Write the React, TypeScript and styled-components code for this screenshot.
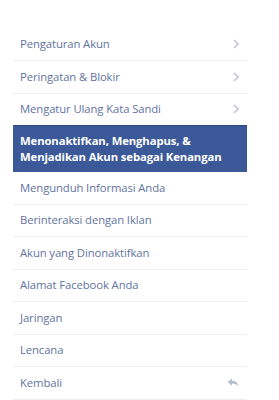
import styled, { createGlobalStyle } from "styled-components";

const GlobalStyle = createGlobalStyle`
  html, body {
    margin: 0;
    padding: 0;
    background: #ffffff;
  }
  body {
    font-family: "Open Sans", "DejaVu Sans", sans-serif;
  }
`;

const Page = styled.div`
  padding: 28.5px 32px 0 13px;
`;

const Menu = styled.ul`
  list-style: none;
  margin: 0;
  padding: 0;
  width: 234px;
`;

const Item = styled.li<{ $active?: boolean }>`
  display: flex;
  align-items: center;
  justify-content: space-between;
  min-height: 32.5px;
  padding: ${(p) => (p.$active ? "7px 7px 6px" : "0 7px")};
  box-sizing: border-box;
  border-bottom: 1px solid ${(p) => (p.$active ? "#3b5998" : "#eceef1")};
  border-top: ${(p) => (p.$active ? "1px solid #2d4a86" : "none")};
  margin-top: ${(p) => (p.$active ? "-1px" : "0")};
  background: ${(p) => (p.$active ? "#3b5998" : "transparent")};
  color: ${(p) => (p.$active ? "#ffffff" : "#62739f")};
  font-size: 11.3px;
  font-weight: ${(p) => (p.$active ? 700 : 400)};
  line-height: 16px;
  letter-spacing: -0.1px;
`;

const Label = styled.span``;

const Icon = styled.span`
  display: flex;
  align-items: center;
  color: #c3c6cf;
  margin-right: 1px;
`;

const Chevron = () => (
  <svg width="6" height="10" viewBox="0 0 6 10">
    <path d="M1 1l4 4-4 4" fill="none" stroke="currentColor" strokeWidth="1.6" />
  </svg>
);

const Back = () => (
  <svg width="12" height="9" viewBox="0 0 12 9">
    <path d="M0.5 4L5 0.5v2.2C8.5 2.7 11 4.5 11.5 8.5 10 6.3 8 5.5 5 5.5v2.2z" fill="#b7bfcf" />
  </svg>
);

const items: { label: string; icon?: "chevron" | "back"; active?: boolean }[] = [
  { label: "Pengaturan Akun", icon: "chevron" },
  { label: "Peringatan & Blokir", icon: "chevron" },
  { label: "Mengatur Ulang Kata Sandi", icon: "chevron" },
  { label: "Menonaktifkan, Menghapus, & Menjadikan Akun sebagai Kenangan", active: true },
  { label: "Mengunduh Informasi Anda" },
  { label: "Berinteraksi dengan Iklan" },
  { label: "Akun yang Dinonaktifkan" },
  { label: "Alamat Facebook Anda" },
  { label: "Jaringan" },
  { label: "Lencana" },
  { label: "Kembali", icon: "back" },
];

export default function App() {
  return (
    <Page>
      <GlobalStyle />
      <Menu>
        {items.map((it) => (
          <Item key={it.label} $active={it.active}>
            <Label>{it.label}</Label>
            {it.icon && <Icon>{it.icon === "chevron" ? <Chevron /> : <Back />}</Icon>}
          </Item>
        ))}
      </Menu>
    </Page>
  );
}
